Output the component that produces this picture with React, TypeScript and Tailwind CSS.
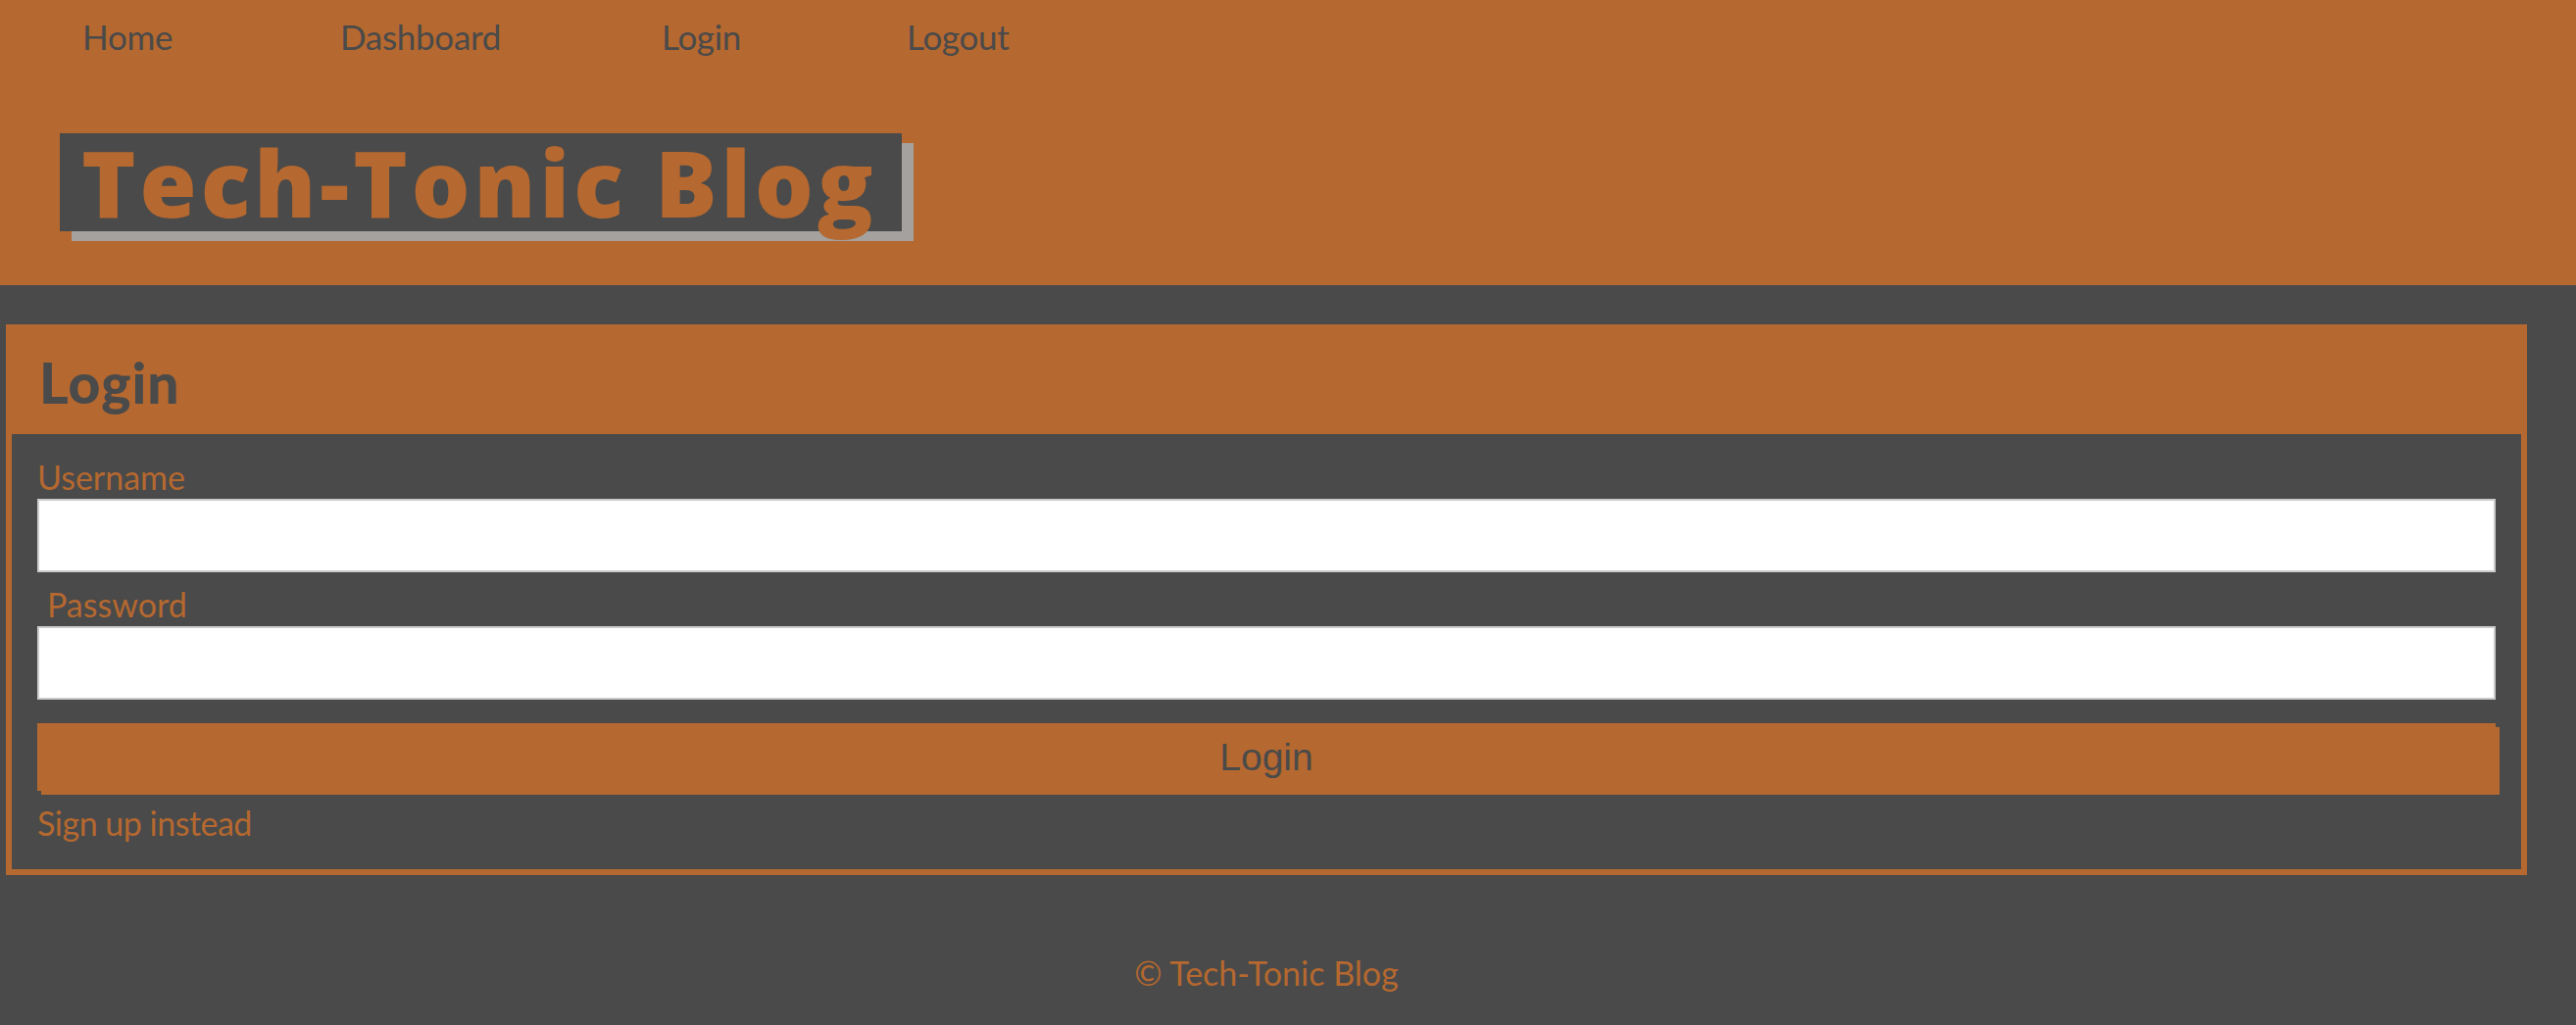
import React from "react";

const Login = () => {
  const navLinks = [
    { text: "Home", href: "/", width: "w-[263px]" },
    { text: "Dashboard", href: "/dashboard", width: "w-[328px]" },
    { text: "Login", href: "/login", width: "w-[250px]" },
    { text: "Logout", href: "/logout", width: "w-auto" },
  ];

  return (
    <div className="min-h-screen bg-[#4a4a4a] font-['Lato',sans-serif]">
      <header className="bg-[#b5682f] h-[291px] pt-[20px]">
        <nav className="flex pl-[84px] text-[35px] leading-none tracking-[-0.3px] text-[#4a4a4a]">
          {navLinks.map((link) => (
            <a key={link.text} href={link.href} className={link.width}>
              {link.text}
            </a>
          ))}
        </nav>
        <div className="mt-[81px] pl-[61px]">
          <h1 className="inline-block h-[100px] w-[859px] bg-[#4a4a4a] pl-[22px] font-['Open_Sans',sans-serif] text-[94px] leading-[100px] font-extrabold tracking-[4px] text-[#b5682f] shadow-[12px_10px_0_#a4a19e] whitespace-nowrap">
            Tech-Tonic Blog
          </h1>
        </div>
      </header>

      <main className="w-[2584px] pt-[40px]">
        <section className="mx-[6px] bg-[#b5682f] px-[6px] pb-[6px]">
          <h2 className="h-[112px] pl-[28px] pt-[29px] text-[57px] leading-[60px] font-black tracking-[1px] text-[#4a4a4a]">
            Login
          </h2>
          <form className="bg-[#4a4a4a] px-[26px] pt-[24px] pb-[27px] text-[34px] leading-[40px] text-[#b5682f]">
            <label className="block">Username</label>
            <input
              type="text"
              className="mt-[2px] block h-[75px] w-full border-2 border-[#cbcbcb] bg-white"
            />
            <label className="mt-[13px] block pl-[10px]">Password</label>
            <input
              type="password"
              className="mt-[2px] block h-[75px] w-full border-2 border-[#cbcbcb] bg-white"
            />
            <button
              type="button"
              className="mt-[24px] block h-[69px] w-full bg-[#b5682f] font-['Liberation_Sans',sans-serif] text-[39px] text-[#4a4a4a] shadow-[4px_4px_0_#b5682f]"
            >
              Login
            </button>
            <a href="/signup" className="mt-[13px] block tracking-[-0.5px]">
              Sign up instead
            </a>
          </form>
        </section>

        <footer className="mt-[80px] text-center text-[34px] leading-[40px] text-[#b5682f]">
          © Tech-Tonic Blog
        </footer>
      </main>
    </div>
  );
};

export default Login;
